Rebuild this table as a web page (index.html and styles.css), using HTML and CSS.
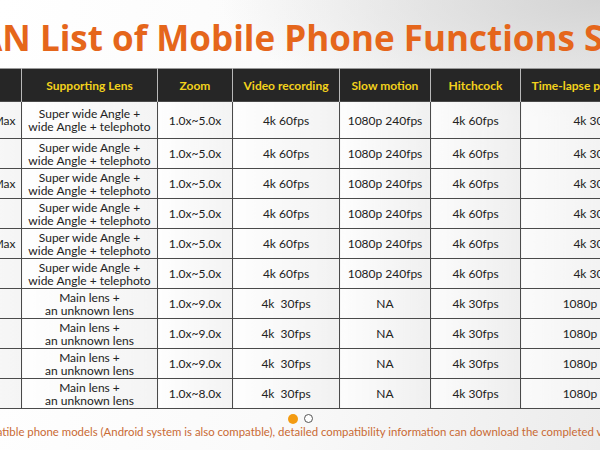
FILE: index.html
```html
<!DOCTYPE html>
<html>
<head>
<meta charset="utf-8">
<link rel="stylesheet" href="styles.css">
</head>
<body>
<div class="page">
  <h1 class="title"><span class="title-text">FAN List of Mobile Phone Functions Supported</span></h1>
  <table class="spec">
    <colgroup>
      <col class="c-model"><col class="c-lens"><col class="c-zoom"><col class="c-video"><col class="c-slow"><col class="c-hitch"><col class="c-lapse">
    </colgroup>
    <thead>
      <tr><th>Model</th><th>Supporting Lens</th><th>Zoom</th><th>Video recording</th><th>Slow motion</th><th>Hitchcock</th><th>Time-lapse photography</th></tr>
    </thead>
    <tbody>
      <tr class="first"><td>iPhone 13 Pro Max</td><td>Super wide Angle +<br>wide Angle + telephoto</td><td>1.0x~5.0x</td><td>4k 60fps</td><td>1080p 240fps</td><td>4k 60fps</td><td>4k 30fps</td></tr>
      <tr><td>iPhone 13 Pro</td><td>Super wide Angle +<br>wide Angle + telephoto</td><td>1.0x~5.0x</td><td>4k 60fps</td><td>1080p 240fps</td><td>4k 60fps</td><td>4k 30fps</td></tr>
      <tr><td>iPhone 12 Pro Max</td><td>Super wide Angle +<br>wide Angle + telephoto</td><td>1.0x~5.0x</td><td>4k 60fps</td><td>1080p 240fps</td><td>4k 60fps</td><td>4k 30fps</td></tr>
      <tr><td>iPhone 12 Pro</td><td>Super wide Angle +<br>wide Angle + telephoto</td><td>1.0x~5.0x</td><td>4k 60fps</td><td>1080p 240fps</td><td>4k 60fps</td><td>4k 30fps</td></tr>
      <tr><td>iPhone 11 Pro Max</td><td>Super wide Angle +<br>wide Angle + telephoto</td><td>1.0x~5.0x</td><td>4k 60fps</td><td>1080p 240fps</td><td>4k 60fps</td><td>4k 30fps</td></tr>
      <tr><td>iPhone 11 Pro</td><td>Super wide Angle +<br>wide Angle + telephoto</td><td>1.0x~5.0x</td><td>4k 60fps</td><td>1080p 240fps</td><td>4k 60fps</td><td>4k 30fps</td></tr>
      <tr><td>iPhone 13</td><td>Main lens +<br>an unknown lens</td><td>1.0x~9.0x</td><td>4k&nbsp; 30fps</td><td>NA</td><td>4k 30fps</td><td>1080p 30fps</td></tr>
      <tr><td>iPhone 12</td><td>Main lens +<br>an unknown lens</td><td>1.0x~9.0x</td><td>4k&nbsp; 30fps</td><td>NA</td><td>4k 30fps</td><td>1080p 30fps</td></tr>
      <tr><td>iPhone 13 mini</td><td>Main lens +<br>an unknown lens</td><td>1.0x~9.0x</td><td>4k&nbsp; 30fps</td><td>NA</td><td>4k 30fps</td><td>1080p 30fps</td></tr>
      <tr><td>iPhone 11</td><td>Main lens +<br>an unknown lens</td><td>1.0x~8.0x</td><td>4k&nbsp; 30fps</td><td>NA</td><td>4k 30fps</td><td>1080p 30fps</td></tr>
    </tbody>
  </table>
  <div class="dots"><span class="dot active"></span><span class="dot"></span></div>
  <p class="note"><span class="note-text">Compatible phone models (Android system is also compatble), detailed compatibility information can download the completed version</span></p>
</div>
</body>
</html>
```

FILE: styles.css
```css
html, body {
  margin: 0;
  padding: 0;
}
body {
  width: 600px;
  height: 450px;
  overflow: hidden;
  font-family: Lato, "Open Sans", sans-serif;
}
.page {
  width: 600px;
  height: 450px;
  overflow: hidden;
  background:
    radial-gradient(ellipse 380px 120px at 600px 0px, #d4d4d4 0%, rgba(212,212,212,0) 100%),
    linear-gradient(100deg, #ffffff 0%, #fafafa 50%, #ececec 100%);
  display: flex;
  flex-direction: column;
}
.title {
  margin: 0;
  height: 68px;
  padding-top: 18px;
  box-sizing: border-box;
  font-family: "Open Sans", Lato, sans-serif;
  font-size: 35px;
  line-height: 40px;
  font-weight: 700;
  color: #e5661b;
  white-space: nowrap;
}
.title-text {
  display: inline-block;
  margin-left: -41px;
}
.spec {
  border-collapse: collapse;
  table-layout: fixed;
  width: 761px;
  margin-left: -92px;
  font-size: 12px;
  color: #222;
}
.c-model { width: 113px; }
.c-lens { width: 136px; }
.c-zoom { width: 75px; }
.c-video { width: 107px; }
.c-slow { width: 91px; }
.c-hitch { width: 90px; }
.c-lapse { width: 152px; }
.spec th {
  height: 32px;
  padding: 0;
  background: #262626;
  color: #f3d21c;
  font-weight: 700;
  font-size: 12px;
  border-left: 1px solid #b8b8b8;
  border-right: 1px solid #b8b8b8;
  border-top: 1px solid #9a9a9a;
  white-space: nowrap;
}
.spec td {
  height: 29px;
  padding: 0;
  text-align: center;
  line-height: 13px;
  border: 1px solid #4a4a4a;
  background: linear-gradient(to right, rgba(255,255,255,0.7), rgba(235,235,235,0.5));
  white-space: nowrap;
}
.spec td:first-child {
  text-align: left;
  padding-left: 6px;
}
.spec tr.first td {
  height: 36px;
}
.dots {
  display: flex;
  justify-content: center;
  gap: 6px;
  margin-top: 5px;
  height: 10px;
}
.dot {
  width: 9px;
  height: 9px;
  border-radius: 50%;
  border: 1px solid #555;
  background: #fff;
  box-sizing: border-box;
}
.dot.active {
  width: 10px;
  height: 10px;
  border: none;
  background: #f39b12;
}
.note {
  margin: 0;
  font-size: 11.4px;
  line-height: 15px;
  color: #c96a34;
  white-space: nowrap;
}
.note-text {
  display: inline-block;
  margin-left: -33px;
}
```
